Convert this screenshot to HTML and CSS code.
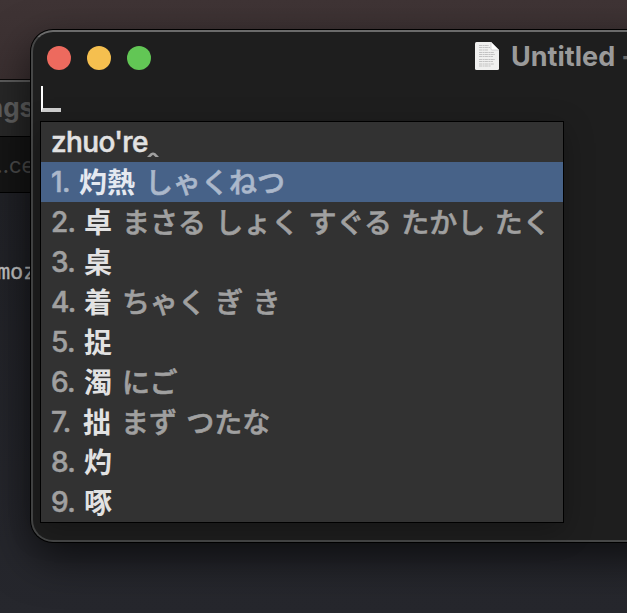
FILE: index.html
```html
<!DOCTYPE html>
<html lang="ja">
<head>
<meta charset="utf-8">
<title>Untitled</title>
<link rel="stylesheet" href="styles.css">
</head>
<body>
<main class="desktop">
  <section class="back-window">
    <div class="back-title">ngs</div>
    <div class="back-tab">…ce</div>
    <div class="back-term">moz</div>
  </section>
  <section class="window">
    <header class="titlebar">
      <div class="lights"><i class="red"></i><i class="yellow"></i><i class="green"></i></div>
      <div class="title">
        <svg class="doc" width="24" height="28" viewBox="0 0 24 28">
          <path d="M1.500 0H16L24 8V26.500Q24 28 22.500 28H1.500Q0 28 0 26.500V1.500Q0 0 1.500 0Z" fill="#f0f0ef"/>
          <path d="M4 3.500H14M4 5.500H15M4 8H13M4 10.500H19M4 12.500H20M4 14.500H18M4 17.500H20M4 19.500H18M4 22H19M4 24H16" stroke="#c2c2c2" stroke-width="1.100" stroke-dasharray="3 .5 2 .4"/>
          <path d="M16 0L24 8H17Q16 8 16 7Z" fill="#fff" stroke="#bcbcbc" stroke-width=".6"/>
        </svg>
        <span class="name">Untitled</span><span class="dash">—</span>
      </div>
    </header>
    <div class="caret"></div>
    <div class="panel">
      <div class="row input"><span>zhuo're</span><svg width="12" height="6" viewBox="0 0 12 6"><path d="M0 5L3.600 1.200Q6 -.4 8.400 1.200L12 5H8.500L6 2.800L3.500 5Z" fill="#a0a0a0"/></svg></div>
      <div class="row selected"><span class="num">1.</span><b>灼熱</b><span class="kana">しゃくねつ</span></div>
      <div class="row"><span class="num">2.</span><b>卓</b><span class="kana">まさる しょく すぐる たかし たく</span></div>
      <div class="row"><span class="num">3.</span><b>桌</b></div>
      <div class="row"><span class="num">4.</span><b>着</b><span class="kana">ちゃく ぎ き</span></div>
      <div class="row"><span class="num">5.</span><b>捉</b></div>
      <div class="row"><span class="num">6.</span><b>濁</b><span class="kana">にご</span></div>
      <div class="row"><span class="num seven">7.</span><b>拙</b><span class="kana">まず つたな</span></div>
      <div class="row"><span class="num">8.</span><b>灼</b></div>
      <div class="row"><span class="num">9.</span><b>啄</b></div>
    </div>
  </section>
</main>
</body>
</html>
```
FILE: styles.css
```css
* { box-sizing: border-box; }
body { margin: 0; }
.desktop {
  position: relative;
  width: 627px;
  height: 613px;
  overflow: hidden;
  padding-top: 79px;
  background: linear-gradient(#3f3435, #3a2f30 79px);
  font-family: Inter, "Noto Sans CJK JP", sans-serif;
}
.back-window {
  width: 627px;
  height: 534px;
  border-top: 1px solid #0b0909;
  background: #24252b;
  white-space: nowrap;
}
.back-title {
  height: 57px;
  border-top: 2px solid #5c5c5c;
  border-bottom: 1px solid #000;
  background: #272727;
  color: #5f5f5f;
  font-size: 26px;
  font-weight: 700;
  line-height: 51px;
  text-indent: -13px;
}
.back-tab {
  height: 56px;
  border-bottom: 1px solid #000;
  background: #151515;
  color: #4b4b4b;
  font-size: 22px;
  line-height: 57px;
  text-indent: -10px;
}
.back-term {
  height: 421px;
  padding-top: 64px;
  color: #c4c4c4;
  font: 22px/30px "DejaVu Sans Mono", monospace;
  letter-spacing: -.3px;
  text-indent: -3px;
  -webkit-text-stroke: .3px;
  background: linear-gradient(#202126, #26272d);
}
/* Front window overlaps the one behind it */
.window {
  position: absolute;
  left: 31px;
  top: 30px;
  width: 640px;
  height: 512px;
  border: 2px solid #464747;
  border-top-color: #6b6b6b;
  border-radius: 22px;
  background: #1e1e1e;
  box-shadow: 0 0 0 1px #000, 0 16px 44px rgba(0, 0, 0, .62);
}
.titlebar {
  display: flex;
  height: 54px;
  padding: 0 0 2px 14px;
  align-items: center;
}
.lights { display: flex; gap: 16px; }
.lights i { width: 24px; height: 24px; border-radius: 50%; }
.red { background: #ed6a5e; }
.yellow { background: #f5bf4f; }
.green { background: #62c655; }
.title {
  display: flex;
  align-items: center;
  margin-left: 324px;
  color: #9a9a9a;
  font-size: 27px;
  font-weight: 700;
  white-space: nowrap;
}
.doc { margin: -4px 12px 0 0; }
.name { line-height: 32px; margin-top: -2px; }
.dash { margin-left: 8px; color: #666; margin-top: -3px; }
.caret {
  width: 20px;
  height: 26px;
  margin-left: 8px;
  border-left: 2px solid #fff;
  border-bottom: 4px solid #d0d0d0;
}
.panel {
  width: 524px;
  height: 402px;
  margin: 9px 0 0 7px;
  border: 1px solid #000;
  background: #323232;
  color: #e2e2e2;
  box-shadow: 0 8px 28px rgba(0, 0, 0, .28);
  font-size: 28px;
  font-weight: 500;
}
.row {
  display: flex;
  height: 40px;
  padding-left: 10px;
  line-height: 41px;
  white-space: nowrap;
}
.input span {
  width: 96px;
  letter-spacing: -.65px;
  -webkit-text-stroke: .5px;
}
.input svg { margin-top: 30px; }
.selected { background: #476288; color: #e5e9f0; }
.num {
  width: 33px;
  color: #a0a0a0;
  letter-spacing: -.7px;
  -webkit-text-stroke: .5px;
}
.selected .num { width: 28px; }
.num.seven { width: 32px; }
.row b, .kana {
  font-family: "Noto Sans CJK JP", sans-serif;
  font-size: 28px;
  line-height: 38px;
}
.row b { margin-right: 10px; font-weight: 700; }
.kana {
  color: #a0a0a0;
  font-weight: 500;
  word-spacing: 3px;
  -webkit-text-stroke: .6px;
}
.selected .num, .selected .kana { color: #abb8cb; }
```
